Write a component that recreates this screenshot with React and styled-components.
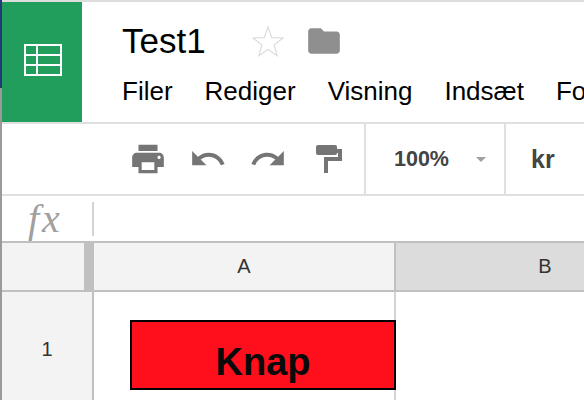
import React from "react";
import styled, { createGlobalStyle } from "styled-components";
import { MdPrint, MdUndo, MdRedo, MdFolder, MdArrowDropDown } from "react-icons/md";

const GlobalStyle = createGlobalStyle`
  html, body {
    margin: 0;
    padding: 0;
    background: #fff;
  }
  body {
    font-family: "Liberation Sans", Arial, sans-serif;
  }
`;

const Page = styled.div`
  display: flex;
  width: 584px;
  height: 400px;
  overflow: hidden;
`;

const Edge = styled.div`
  width: 2px;
  flex: none;
  background: linear-gradient(#1f3a78 0, #1f3a78 87px, #3a3a3a 87px, #3a3a3a 88px, #9a9a9a 88px);
`;

const Main = styled.div`
  flex: 1;
  min-width: 0;
  display: flex;
  flex-direction: column;
`;

const Header = styled.header`
  display: flex;
  flex: none;
  height: 120px;
  border-top: 2px solid #ddd;
  border-bottom: 2px solid #e0e0e0;
`;

const Tile = styled.div`
  width: 80px;
  flex: none;
  box-sizing: border-box;
  padding: 0 0 4px 2px;
  background: #219e5c;
  display: flex;
  align-items: center;
  justify-content: center;
`;

const HeaderBody = styled.div`
  padding-left: 40px;
  display: flex;
  flex-direction: column;
`;

const TitleRow = styled.div`
  display: flex;
  align-items: center;
  height: 78px;
`;

const Title = styled.div`
  font-size: 35px;
  color: #000;
  width: 130px;
`;

const FolderWrap = styled.span`
  display: flex;
  margin-left: 21px;
  color: #8f8f8f;
`;

const Menu = styled.nav`
  display: flex;
  gap: 32px;
  font-size: 26px;
  color: #000;
  white-space: nowrap;
  margin-top: -4px;
`;

const Toolbar = styled.div`
  display: flex;
  flex: none;
  height: 70px;
  border-bottom: 2px solid #e0e0e0;
`;

const ToolGroup = styled.div`
  display: flex;
  align-items: center;
  flex: none;
  width: ${(p) => p.$width}px;
  padding-left: ${(p) => p.$left}px;
  box-sizing: border-box;
  border-right: ${(p) => (p.$divider ? "2px solid #e0e0e0" : "none")};
  color: #757575;
  gap: 22px;
`;

const RollerIcon = styled.svg`
  margin-left: 7px;
`;

const Zoom = styled.span`
  font-size: 21.5px;
  font-weight: 700;
  color: #444;
`;

const Arrow = styled.span`
  display: flex;
  color: #a0a0a0;
  margin-left: -2px;
`;

const Currency = styled.span`
  font-size: 25px;
  font-weight: 700;
  color: #444;
`;

const FormulaBar = styled.div`
  display: flex;
  align-items: center;
  flex: none;
  height: 45px;
  border-bottom: 2px solid #c0c0c0;
`;

const Fx = styled.span`
  width: 90px;
  padding-left: 26px;
  box-sizing: border-box;
  font-family: "Liberation Serif", "Times New Roman", serif;
  font-style: italic;
  font-size: 40px;
  letter-spacing: 3px;
  line-height: 45px;
  color: #a0a0a0;
`;

const FxDivider = styled.span`
  width: 2px;
  height: 34px;
  background: #d4d4d4;
`;

const Grid = styled.div`
  display: grid;
  grid-template-columns: 92px 302px 300px;
  grid-template-rows: 49px 114px;
  flex: none;
`;

const Corner = styled.div`
  background: #f3f3f3;
  border-bottom: 2px solid #c0c0c0;
  display: flex;
  justify-content: flex-end;
`;

const Handle = styled.div`
  width: 10px;
  background: #c0c0c0;
`;

const ColHead = styled.div`
  display: flex;
  align-items: center;
  justify-content: center;
  font-size: 20px;
  color: #333;
  background: ${(p) => (p.$selected ? "#dcdcdc" : "#f3f3f3")};
  border-bottom: 2px solid #c0c0c0;
  border-right: 2px solid #c0c0c0;
`;

const RowHead = styled.div`
  display: flex;
  align-items: center;
  justify-content: center;
  background: #f3f3f3;
  border-right: 2px solid #c0c0c0;
  font-size: 20px;
  color: #333;
`;

const Cell = styled.div`
  padding: 28px 0 0 36px;
  box-sizing: border-box;
  border-right: ${(p) => (p.$last ? "none" : "2px solid #d4d4d4")};
`;

const Button = styled.div`
  width: 266px;
  height: 70px;
  box-sizing: border-box;
  padding-bottom: 3px;
  background: #ff0f1c;
  border: 2px solid #000;
  display: flex;
  align-items: flex-end;
  justify-content: center;
  font-size: 38px;
  font-weight: 700;
  color: #0a0a0a;
  line-height: 46px;
`;

const SheetIcon = () => (
  <svg width="38" height="32" viewBox="0 0 38 32" fill="none" stroke="#fff" strokeWidth="2">
    <rect x="1" y="1" width="36" height="30" />
    <path d="M1 11h36M1 21h36M13 1v30" />
  </svg>
);

const StarIcon = () => (
  <svg width="32" height="32" viewBox="0 0 32 32" fill="none" stroke="#dcdcdc" strokeWidth="1.2">
    <path d="M16 2l3.800 10.600 11.200.4-8.800 6.900 3 10.800L16 24.500 6.800 30.700l3-10.800L1 13l11.200-.4z" />
  </svg>
);

const Roller = () => (
  <RollerIcon width="26" height="28" viewBox="0 0 26 28" fill="currentColor">
    <path d="M0 2a2 2 0 0 1 2-2h17a2 2 0 0 1 2 2v6a2 2 0 0 1-2 2H2a2 2 0 0 1-2-2z" />
    <path d="M21 4h5v12H12v12H8V12h14V8h-1z" />
  </RollerIcon>
);

export default function App() {
  return (
    <>
      <GlobalStyle />
      <Page>
        <Edge />
        <Main>
          <Header>
            <Tile>
              <SheetIcon />
            </Tile>
            <HeaderBody>
              <TitleRow>
                <Title>Test1</Title>
                <StarIcon />
                <FolderWrap>
                  <MdFolder size={38} />
                </FolderWrap>
              </TitleRow>
              <Menu>
                <span>Filer</span>
                <span>Rediger</span>
                <span>Visning</span>
                <span>Indsæt</span>
                <span>Format</span>
              </Menu>
            </HeaderBody>
          </Header>
          <Toolbar>
            <ToolGroup $width={364} $left={127} $divider>
              <MdPrint size={38} />
              <MdUndo size={38} />
              <MdRedo size={38} />
              <Roller />
            </ToolGroup>
            <ToolGroup $width={140} $left={28} $divider>
              <Zoom>100%</Zoom>
              <Arrow>
                <MdArrowDropDown size={24} />
              </Arrow>
            </ToolGroup>
            <ToolGroup $width={78} $left={25}>
              <Currency>kr</Currency>
            </ToolGroup>
          </Toolbar>
          <FormulaBar>
            <Fx>fx</Fx>
            <FxDivider />
          </FormulaBar>
          <Grid>
            <Corner>
              <Handle />
            </Corner>
            <ColHead>A</ColHead>
            <ColHead $selected>B</ColHead>
            <RowHead>1</RowHead>
            <Cell>
              <Button>Knap</Button>
            </Cell>
            <Cell $last />
          </Grid>
        </Main>
      </Page>
    </>
  );
}
